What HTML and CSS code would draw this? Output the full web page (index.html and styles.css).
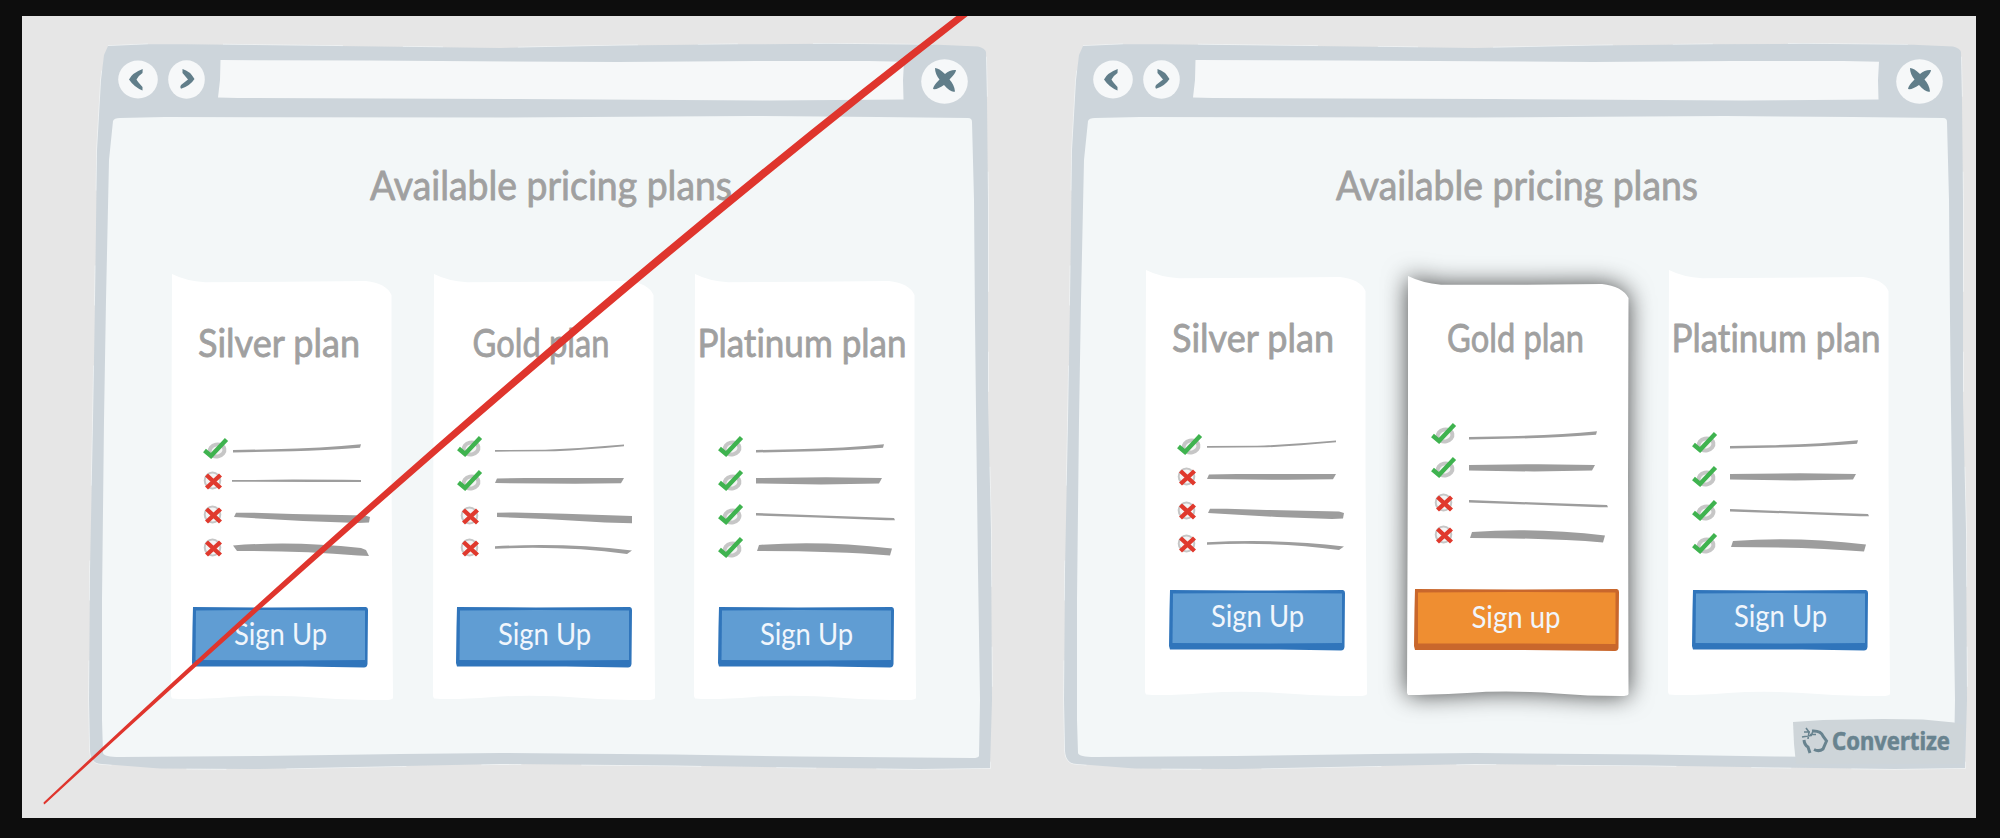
FILE: index.html
```
<!DOCTYPE html>
<html lang="en">
<head>
<meta charset="utf-8">
<title>Available pricing plans</title>
<link rel="stylesheet" href="styles.css">
</head>
<body>
<svg class="defs" width="0" height="0" aria-hidden="true">
  <defs>
    <g id="frame">
      <path id="frame-edge" class="frame-outer" d="M20 3 L60 1.3 L97 1.2 L332 4 L412 5 L532 2.5 L647 1.3 L740 .8 L850 1.8 L890 3.5 Q897 5 898 9 L899 57 L900 157 L900 357 L903 487 L904 657 L902 725 L832 726 L712 724.5 L587 722.5 L412 721 L292 723.5 L172 726 L72 725.5 L14 721 Q3 721 2 708 L1 657 L2 527 L5 377 L7 257 L9 107 L13 37 L16 12Z"/>
      <path class="frame-inner" d="M25 78 Q26 75 32 75 L77 74 L412 74.5 L662 73 L790 74 L880 75 Q884 75 884 79 L886 157 L887 277 L888 367 L890 527 L892 657 L891 713 Q890 715 885 715 L712 713.5 L587 711.5 L412 710 L312 711 L172 713 L32 714 Q16 714 15 710 L14 677 L14 557 L16 377 L18 257 L21 117Z"/>
    </g>
    <path id="card" d="M1 0 Q15 7 34 8.3 L120 7.8 L195 7 Q215 9 220.5 21 L220.5 200 L222 424 Q221 426 214 426 Q180 426 150 424 Q100 420 60 423 Q20 426 1 424.5 L0 422 L.3 200Z"/>
    <path id="card-short" d="M1 0 Q15 7 34 8.7 L120 8.7 L195 8 Q215 10 221.5 22 L221 200 L221.5 418 Q221 420 214 420 Q180 420 150 417.5 Q100 414 60 417 Q20 419 1 419 L0 417 L1 150Z"/>
    <g id="check">
      <ellipse class="ring ring-thick" cx="14" cy="14.5" rx="7.5" ry="6" transform="rotate(-12 14 14.5)"/>
      <path class="check-mark" d="M1.5 14.5 L8 20 L23.5 3.5"/>
    </g>
    <g id="cross">
      <ellipse class="ring" cx="9.5" cy="10.5" rx="7.8" ry="8"/>
      <path class="cross-mark" d="M3.5 5 L17.5 18 M17.5 5 L3.5 18"/>
    </g>
    <path id="up" d="M0 19 L40 18.3 Q90 17 128 13.2 L127 16.8 Q90 19.5 60 20.3 L0 21.5Z"/>
    <path id="up-thin" d="M0 19 L50 18.8 Q90 17 129 13.5 L129 15.3 Q90 19 60 20.3 L0 20.7Z"/>
    <path id="flat-thin" d="M-1 15 H20 L60 14.5 L110 14.7 L128 15 V17 H80 L-1 16.8Z"/>
    <path id="flat" d="M2 13.5 L30 13 L129 13 L126 18.2 L80 18.8 L0 18Z"/>
    <path id="flat-bold" d="M0 13 L70 12.2 L126 13 L123 18.5 L65 19.5 L0 18.5Z"/>
    <path id="down" d="M0 14 L60 16.3 L138 19 L139 21.3 L130 21.3 L60 18.5 L0 16.5Z"/>
    <path id="down-bold" d="M3 13.7 L20 13.7 L60 15 L132 16.5 L137 18 L136 23.5 L125 24 L70 22 L1 18Z"/>
    <path id="down-block" d="M2 13.7 L20 13.5 L70 14.7 L137 17 V24.3 L110 23.5 L50 20 L2 18Z"/>
    <path id="arc-thin" d="M0 13.3 Q70 9.5 137 17.5 L132 21 Q70 12.5 0 15.7Z"/>
    <path id="arc" d="M3 12 Q65 7 136 15.5 L134 22.5 Q80 18 1 18Z"/>
    <path id="arc-bold" d="M0 12.5 Q60 7.5 128 15 L133 17 L136 23 L125 22.5 Q70 18 4 18Z"/>
    <g id="button-face">
      <path class="edge" d="M1 0 L80 .5 L174 0 Q176 .5 176 3 L175.5 57 Q175 60.5 172 60.5 L110 59.5 L1 59.5 L0 56 L.5 20Z"/>
      <path class="face" d="M4 3.5 L80 3 L173 3.5 L173 53 L100 53.5 L3.5 53Z"/>
    </g>
    <g id="back">
      <ellipse class="disc" cx="20" cy="19.5" rx="19.8" ry="19"/>
      <path class="glyph" d="M24.7 9 Q14 13 11 19.5 Q16 27 24.5 30.5 L24.5 27 Q20 22 18.5 19.5 Q20 16 24.5 13Z"/>
    </g>
    <g id="forward">
      <ellipse class="disc" cx="18.5" cy="19.5" rx="18.3" ry="19.3"/>
      <path class="glyph" d="M14.5 9 Q22 11 26.5 19 Q22 26 13 28.7 Q11.5 27 13 25 L20 19.5 L14.5 13Z"/>
    </g>
    <path id="address" class="disc" d="M2.5 0 L150 .6 L400 2 L540 1 L650 1 L686 1.8 L685 20 L685.5 39.5 L550 40.5 L300 39 L20 38 L0 37.5 L2 20Z"/>
    <g id="close">
      <ellipse class="disc" cx="23.5" cy="22.5" rx="23.3" ry="22.3"/>
      <path class="glyph" d="M14 9 Q18 9 24 15 Q29 10.5 35 11 Q35 14 28.5 20.500 Q33.500 26 34 32.5 Q30 34 23 26 Q16 31 12 30 Q12 27 18.500 20.5 Q14 15 14 9Z"/>
    </g>
  </defs>
</svg>

<main class="stage">
  <section class="window">
    <svg class="window-frame" width="905" height="730"><use href="#frame"/></svg>
    <header class="toolbar">
      <svg class="back" width="40" height="39"><use href="#back"/></svg>
      <svg class="forward" width="37" height="39"><use href="#forward"/></svg>
      <svg class="address" width="686" height="40"><use href="#address"/></svg>
      <svg class="close" width="47" height="45"><use href="#close"/></svg>
    </header>
    <h1 class="title"><svg width="905" height="120"><text x="282" y="84" textLength="362" lengthAdjust="spacingAndGlyphs">Available pricing plans</text></svg></h1>
    <div class="plans">
      <article class="card inset">
        <svg class="paper" width="222" height="426"><use href="#card"/></svg>
        <h2 class="name"><svg width="222" height="110"><text x="27" y="82.5" textLength="162" lengthAdjust="spacingAndGlyphs">Silver plan</text></svg></h2>
        <ul class="features">
          <li><svg class="icon"><use href="#check"/></svg><svg class="line"><use href="#up"/></svg></li>
          <li><svg class="icon"><use href="#cross"/></svg><svg class="line"><use href="#flat-thin"/></svg></li>
          <li><svg class="icon"><use href="#cross"/></svg><svg class="line"><use href="#down-bold"/></svg></li>
          <li><svg class="icon"><use href="#cross"/></svg><svg class="line"><use href="#arc-bold"/></svg></li>
        </ul>
        <button class="signup"><svg width="176" height="61"><use href="#button-face"/><text x="42" y="37.5" textLength="93" lengthAdjust="spacingAndGlyphs">Sign Up</text></svg></button>
      </article>
      <article class="card">
        <svg class="paper" width="222" height="426"><use href="#card"/></svg>
        <h2 class="name"><svg width="222" height="110"><text x="39.500" y="82.5" textLength="137" lengthAdjust="spacingAndGlyphs">Gold plan</text></svg></h2>
        <ul class="features">
          <li><svg class="icon tick"><use href="#check"/></svg><svg class="line"><use href="#up-thin"/></svg></li>
          <li><svg class="icon tick"><use href="#check"/></svg><svg class="line"><use href="#flat"/></svg></li>
          <li><svg class="icon no"><use href="#cross"/></svg><svg class="line"><use href="#down-block"/></svg></li>
          <li><svg class="icon no"><use href="#cross"/></svg><svg class="line"><use href="#arc-thin"/></svg></li>
        </ul>
        <button class="signup"><svg width="176" height="61"><use href="#button-face"/><text x="42" y="37.5" textLength="93" lengthAdjust="spacingAndGlyphs">Sign Up</text></svg></button>
      </article>
      <article class="card">
        <svg class="paper" width="222" height="426"><use href="#card"/></svg>
        <h2 class="name"><svg width="222" height="110"><text x="3.5" y="82.5" textLength="209" lengthAdjust="spacingAndGlyphs">Platinum plan</text></svg></h2>
        <ul class="features">
          <li><svg class="icon tick"><use href="#check"/></svg><svg class="line"><use href="#up"/></svg></li>
          <li><svg class="icon tick"><use href="#check"/></svg><svg class="line"><use href="#flat-bold"/></svg></li>
          <li><svg class="icon tick"><use href="#check"/></svg><svg class="line"><use href="#down"/></svg></li>
          <li><svg class="icon tick"><use href="#check"/></svg><svg class="line"><use href="#arc"/></svg></li>
        </ul>
        <button class="signup"><svg width="176" height="61"><use href="#button-face"/><text x="42" y="37.5" textLength="93" lengthAdjust="spacingAndGlyphs">Sign Up</text></svg></button>
      </article>
    </div>
  </section>

  <section class="window preferred">
    <svg class="window-frame" width="905" height="730"><use href="#frame"/></svg>
    <header class="toolbar">
      <svg class="back" width="40" height="39"><use href="#back"/></svg>
      <svg class="forward" width="37" height="39"><use href="#forward"/></svg>
      <svg class="address" width="686" height="40"><use href="#address"/></svg>
      <svg class="close" width="47" height="45"><use href="#close"/></svg>
    </header>
    <h1 class="title"><svg width="905" height="120"><text x="273" y="84" textLength="362" lengthAdjust="spacingAndGlyphs">Available pricing plans</text></svg></h1>
    <div class="plans">
      <article class="card inset">
        <svg class="paper" width="222" height="426"><use href="#card"/></svg>
        <h2 class="name"><svg width="222" height="110"><text x="27" y="82.2" textLength="162" lengthAdjust="spacingAndGlyphs">Silver plan</text></svg></h2>
        <ul class="features">
          <li><svg class="icon"><use href="#check"/></svg><svg class="line"><use href="#up-thin"/></svg></li>
          <li><svg class="icon"><use href="#cross"/></svg><svg class="line"><use href="#flat"/></svg></li>
          <li><svg class="icon"><use href="#cross"/></svg><svg class="line"><use href="#down-bold"/></svg></li>
          <li><svg class="icon"><use href="#cross"/></svg><svg class="line"><use href="#arc-thin"/></svg></li>
        </ul>
        <button class="signup"><svg width="176" height="61"><use href="#button-face"/><text x="42" y="36.5" textLength="93" lengthAdjust="spacingAndGlyphs">Sign Up</text></svg></button>
      </article>
      <article class="card featured">
        <svg class="paper" width="222" height="420"><use href="#card-short"/></svg>
        <h2 class="name"><svg width="222" height="110"><text x="40" y="75.7" textLength="137" lengthAdjust="spacingAndGlyphs">Gold plan</text></svg></h2>
        <ul class="features">
          <li><svg class="icon tick"><use href="#check"/></svg><svg class="line"><use href="#up"/></svg></li>
          <li><svg class="icon tick"><use href="#check"/></svg><svg class="line"><use href="#flat-bold"/></svg></li>
          <li><svg class="icon no"><use href="#cross"/></svg><svg class="line"><use href="#down"/></svg></li>
          <li><svg class="icon no"><use href="#cross"/></svg><svg class="line"><use href="#arc"/></svg></li>
        </ul>
        <button class="signup"><svg width="205" height="62">
          <path class="edge" d="M1 0 L100 .5 L203 0 Q205 .5 205 3 L204.5 59 Q204 62 201 62 L110 61 L1 61 L0 57 L.5 20Z"/>
          <path class="face" d="M4 3.5 L100 3 L201.5 3.5 L201.5 55 L110 54.5 L4 54.5Z"/>
          <text x="57.5" y="39.3" textLength="89" lengthAdjust="spacingAndGlyphs">Sign up</text></svg></button>
      </article>
      <article class="card">
        <svg class="paper" width="222" height="426"><use href="#card"/></svg>
        <h2 class="name"><svg width="222" height="110"><text x="3.5" y="82.2" textLength="209" lengthAdjust="spacingAndGlyphs">Platinum plan</text></svg></h2>
        <ul class="features">
          <li><svg class="icon tick"><use href="#check"/></svg><svg class="line"><use href="#up"/></svg></li>
          <li><svg class="icon tick"><use href="#check"/></svg><svg class="line"><use href="#flat-bold"/></svg></li>
          <li><svg class="icon tick"><use href="#check"/></svg><svg class="line"><use href="#down"/></svg></li>
          <li><svg class="icon tick"><use href="#check"/></svg><svg class="line"><use href="#arc"/></svg></li>
        </ul>
        <button class="signup"><svg width="176" height="61"><use href="#button-face"/><text x="42" y="36.5" textLength="93" lengthAdjust="spacingAndGlyphs">Sign Up</text></svg></button>
      </article>
    </div>
    <div class="brand">
      <svg width="170" height="46">
        <path class="brand-tab" d="M0 3 L30 1 L90 0 L130 .5 L161 3.5 L171 6 L170 45 L3 45 L1 25Z"/>
        <path class="brand-icon" d="M19 12 Q28 11.5 30 17 L33.5 22 L30 30 Q26 33 21 30.5 M11 21 Q11.500 26 15 28 L17 34"/>
        <path class="brand-icon thin" d="M13 9 L16 13 L15 20 M9 18 L18 16.500 M20 12 L18 17 M11 13 H17 M17 15.5 H23"/>
        <text x="39" y="31" textLength="118" lengthAdjust="spacingAndGlyphs">Convertize</text>
      </svg>
    </div>
  </section>

  <svg class="strike" width="1954" height="802" viewBox="22 16 1954 802">
    <path d="M43.5 802.5 Q547 328.500 975 1.7 L975 10.3 Q548 341.500 45.5 803.500 L44 804.5Z"/>
  </svg>
</main>
</body>
</html>
```
FILE: styles.css
```
body {
  margin: 0;
  padding: 16px 24px 20px 22px;
  background: #0d0d0d;
  font-family: Lato, "Open Sans", sans-serif;
}

svg {
  display: block;
  overflow: visible;
}

.defs {
  position: absolute;
}

.stage {
  position: relative;
  box-sizing: border-box;
  display: flex;
  gap: 70px;
  width: 1954px;
  height: 802px;
  padding: 27px 0 0 66px;
  overflow: hidden;
  background: #e6e6e6;
}

.window {
  position: relative;
  flex: none;
  width: 905px;
  height: 730px;
}

.window-frame {
  position: absolute;
  inset: 0;
}

.frame-outer {
  fill: #cdd5db;
  stroke: #f0f3f4;
  stroke-width: 1.6;
  stroke-dasharray: 40 75 120 60;
  paint-order: stroke;
}

.frame-inner {
  fill: #f3f7f8;
}

.toolbar {
  position: relative;
  display: flex;
  align-items: center;
  height: 73px;
  padding-left: 29.5px;
}

.toolbar svg {
  flex: none;
}

.forward {
  margin-left: 10px;
}

.address {
  margin-left: 13px;
}

.close {
  margin: 3px 0 0 17.5px;
}

.disc {
  fill: #f6f8f9;
}

.glyph {
  fill: #617e8a;
}

.title,
.name {
  position: relative;
  margin: 0;
  font-weight: 400;
}

.title {
  height: 157.5px;
}

.preferred .title {
  height: 153.5px;
}

.title text,
.name text {
  fill: #a0a0a0;
  stroke: #a0a0a0;
  stroke-width: 0.8px;
  stroke-linejoin: round;
  font-variant-ligatures: none;
}

.title text {
  font-size: 40px;
}

.name text {
  font-size: 39px;
}

.plans {
  position: relative;
  display: flex;
  align-items: flex-start;
  gap: 39.5px;
  padding-left: 83px;
}

.preferred .plans {
  padding-left: 82px;
}

.card {
  position: relative;
  flex: none;
  width: 222px;
  height: 426px;
}

.paper {
  position: absolute;
  inset: 0;
  fill: #fff;
}

.name {
  height: 157.5px;
}

.features {
  position: relative;
  display: grid;
  grid-template-rows: 34px 34px 34px 32px;
  margin: 0;
  padding: 0 0 0 24px;
  list-style: none;
}

.inset .features {
  padding-left: 32px;
}

.features li {
  display: flex;
}

.icon {
  width: 38px;
  height: 24px;
  margin-top: 5px;
}

.inset .icon {
  width: 30px;
}

.tick {
  margin-top: 3px;
}

.no {
  margin: 6px -3px 0 3px;
}

.features li:last-child .icon {
  margin-top: 4px;
}

.features li:last-child .tick {
  margin-top: 2px;
}

.ring {
  fill: #f4f4f4;
  stroke: #c6c6c6;
  stroke-width: 2;
}

.ring-thick {
  stroke-width: 4;
}

.check-mark,
.cross-mark {
  fill: none;
  stroke-width: 4.4;
}

.check-mark {
  stroke: #3fb34f;
}

.cross-mark {
  stroke: #e0392d;
}

.line {
  width: 140px;
  height: 34px;
  fill: #9d9d9d;
}

.signup {
  position: relative;
  display: block;
  margin: 41.5px 0 0 23.5px;
  padding: 0;
  border: 0;
  background: none;
  font-family: inherit;
}

.inset .signup {
  margin-left: 21px;
}

.preferred .signup {
  margin: 28.5px 0 0 24px;
}

.edge {
  fill: #3075bb;
}

.face {
  fill: #609dd3;
}

.signup text {
  fill: #f1f6fc;
  font-size: 30.5px;
}

.preferred .featured {
  height: 420px;
  margin-top: 6.5px;
}

.featured .paper {
  filter: drop-shadow(0 0 12px rgba(0, 0, 0, 0.72));
}

.featured .name {
  height: 142px;
}

.preferred .featured .signup {
  margin: 36.5px 0 0 7.5px;
}

.featured .edge {
  fill: #c9672c;
}

.featured .face {
  fill: #ef8e31;
}

.brand {
  position: absolute;
  left: 730px;
  top: 676px;
}

.brand-tab {
  fill: #ced5d9;
}

.brand-icon {
  fill: none;
  stroke: #68838f;
  stroke-width: 3;
}

.brand-icon.thin {
  stroke-width: 1.6;
}

.brand text {
  fill: #68838f;
  font-family: "Noto Sans", "Open Sans", sans-serif;
  font-size: 24.5px;
  font-weight: 700;
  stroke: #68838f;
  stroke-width: 0.6px;
}

.strike {
  position: absolute;
  left: 0;
  top: 0;
  fill: #df352d;
  pointer-events: none;
}
```
